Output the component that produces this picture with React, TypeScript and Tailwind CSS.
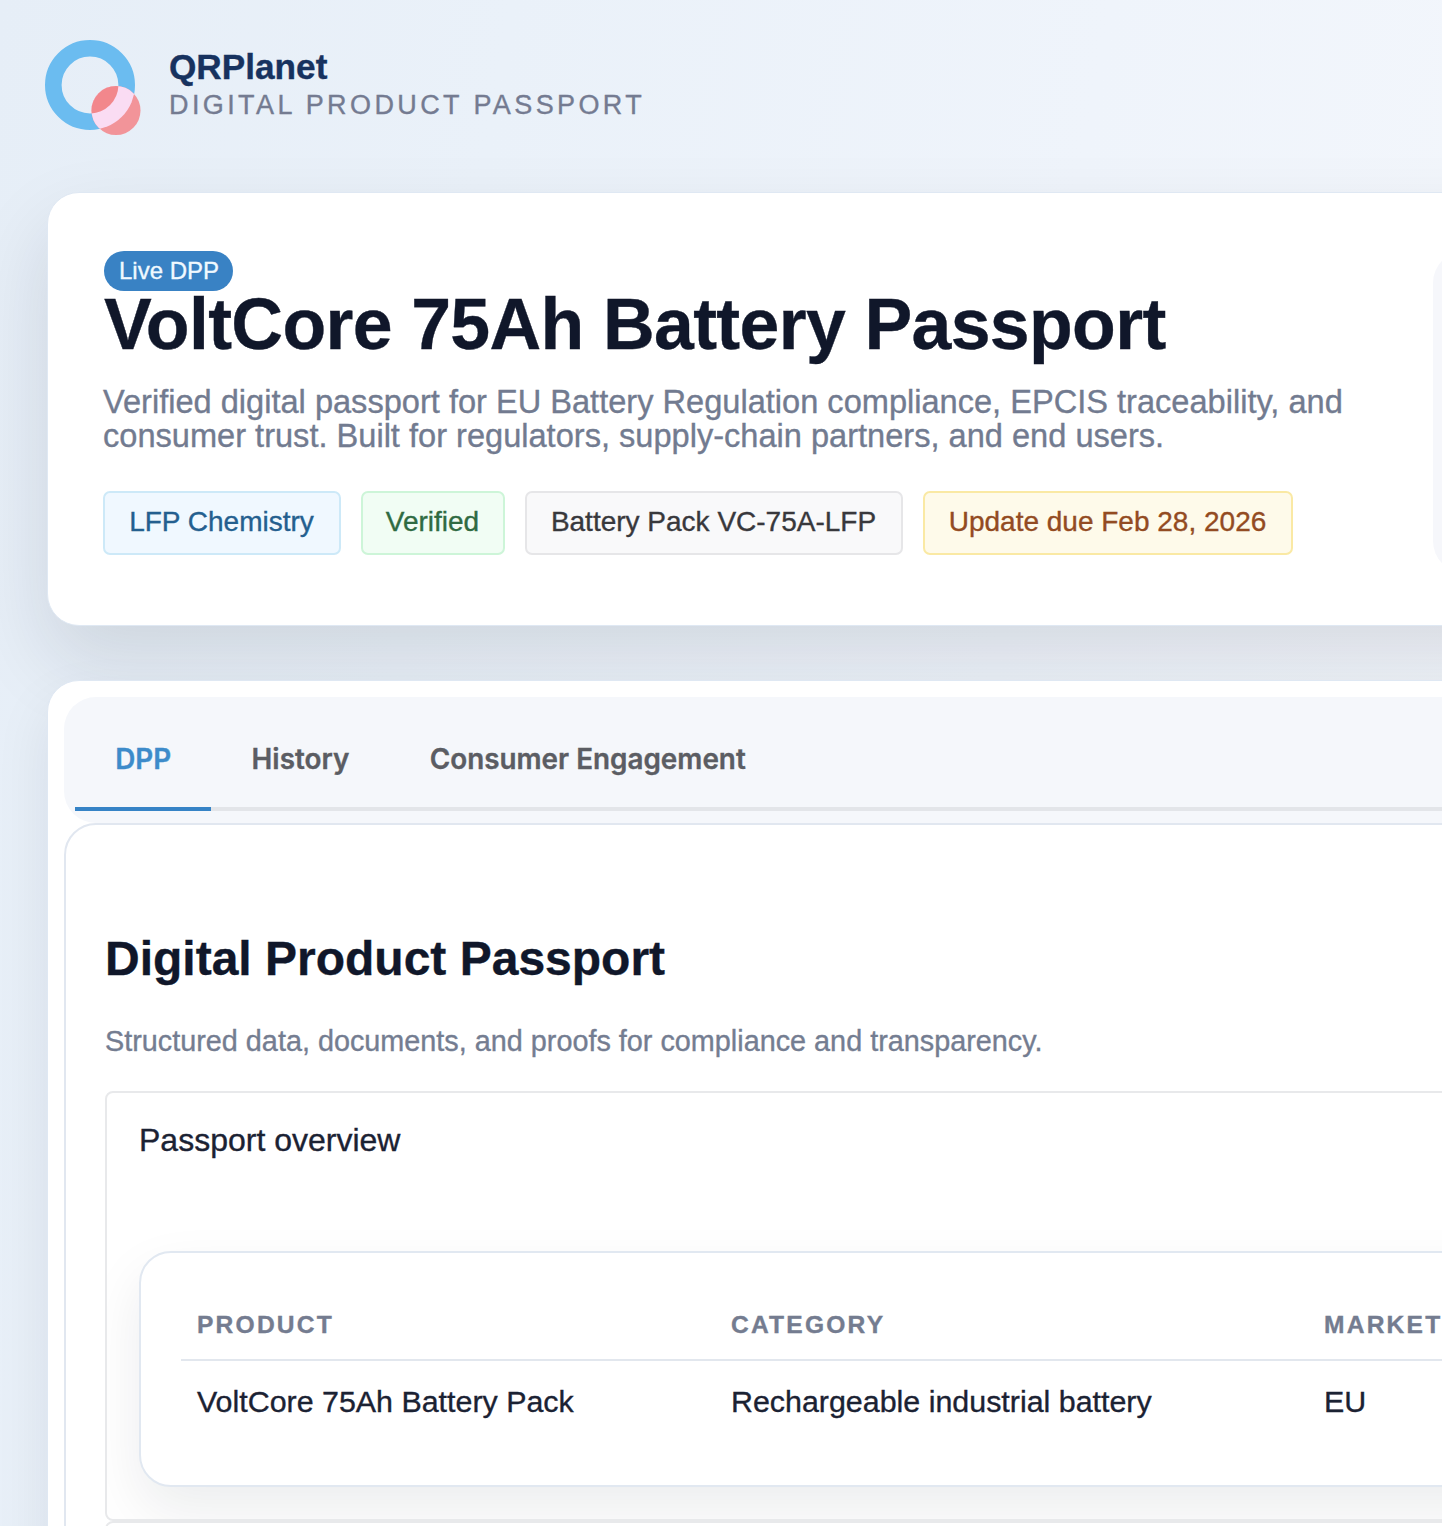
import React, { useState } from "react";
import { clsx } from "clsx";

const tabs = ["DPP", "History", "Consumer Engagement"];

const badges = [
  { label: "LFP Chemistry", className: "w-[238px] bg-[#f0f8ff] border-[#cde9f8] text-[#245f8f]" },
  { label: "Verified", className: "w-[144px] bg-[#f1fdf4] border-[#cdf5d8] text-[#2f6b42]" },
  { label: "Battery Pack VC-75A-LFP", className: "w-[378px] bg-[#f9f9fa] border-[#e6e6e8] text-[#38383c]" },
  { label: "Update due Feb 28, 2026", className: "w-[370px] bg-[#fefaea] border-[#fae9a4] text-[#934b22]" },
];

const columns = [
  { title: "Product", value: "VoltCore 75Ah Battery Pack", className: "w-[534px]" },
  { title: "Category", value: "Rechargeable industrial battery", className: "w-[593px]" },
  { title: "Market", value: "EU", className: "w-[300px]" },
];

const Logo = (props: React.SVGProps<SVGSVGElement>) => (
  <svg width="97" height="97" viewBox="0 0 97 97" fill="none" {...props}>
    <defs>
      <clipPath id="planet">
        <circle cx="71" cy="70.5" r="24.5" />
      </clipPath>
    </defs>
    <circle cx="45" cy="45" r="36.7" stroke="#6bbcf0" strokeWidth="16.6" />
    <circle cx="71" cy="70.5" r="24.5" fill="#f29499" />
    <g clipPath="url(#planet)">
      <circle cx="45" cy="45" r="45" fill="#fadcf3" />
      <circle cx="45" cy="45" r="28.4" fill="#f2878c" />
    </g>
  </svg>
);

function Header() {
  return (
    <header className="flex h-[192px] pl-[45px] pt-10">
      <Logo className="shrink-0" />
      <div className="pl-[27px] pt-[7px]">
        <div className="text-[35.2px] leading-[40px] font-bold text-[#17325f]">QRPlanet</div>
        <div className="text-[27px] leading-[37px] tracking-[3.4px] uppercase text-[#747b91]">
          Digital Product Passport
        </div>
      </div>
    </header>
  );
}

function Hero() {
  return (
    <section className="flex h-[434px] w-[2000px] rounded-[32px] border border-[#dfe8f3] bg-white pl-[56px] pt-[58px] shadow-[0_36px_80px_rgba(15,23,42,0.12)]">
      <div className="w-[1329px] shrink-0">
        <span className="flex h-10 w-[129px] items-center justify-center rounded-full bg-[#3982c4] pl-px text-[24px] text-[#f0f9ff]">
          Live DPP
        </span>
        <h1 className="text-[71.6px] leading-[67px] font-bold tracking-[-0.64px] text-[#10172a] whitespace-nowrap">
          VoltCore 75Ah Battery Passport
        </h1>
        <p className="-ml-px mt-[27px] text-[32.6px] leading-[34.4px] text-[#727b90] whitespace-nowrap">
          Verified digital passport for EU Battery Regulation compliance, EPCIS traceability, and
          <br />
          consumer trust. Built for regulators, supply-chain partners, and end users.
        </p>
        <div className="-ml-px mt-[37px] flex gap-5">
          {badges.map((badge) => (
            <span
              key={badge.label}
              className={clsx(
                "flex h-16 items-center justify-center rounded-[7px] border-2 pr-px pb-[2px] text-[28px] whitespace-nowrap",
                badge.className,
              )}
            >
              {badge.label}
            </span>
          ))}
        </div>
      </div>
      <aside className="h-[322px] w-[400px] rounded-[32px] bg-[#f6f7fb]" />
    </section>
  );
}

function Tabs() {
  const [active, setActive] = useState(tabs[0]);

  return (
    <div className="h-[126px] rounded-[32px] bg-[#f5f7fb] px-[11px] pt-3">
      <div className="flex h-[102px] border-b-4 border-[#e3e5e9]">
        {tabs.map((tab) => (
          <button
            key={tab}
            onClick={() => setActive(tab)}
            className={clsx(
              "-mb-1 h-[102px] border-b-4 px-[40.2px] pt-1 font-[Inter,sans-serif] text-[27.85px] font-semibold whitespace-nowrap",
              tab === active ? "border-[#3683c6] text-[#3d8bca]" : "border-transparent text-[#5b5d63]",
            )}
          >
            {tab}
          </button>
        ))}
      </div>
    </div>
  );
}

function OverviewTable() {
  return (
    <div className="h-[236px] w-[1760px] rounded-[32px] border-2 border-[#e1e8f1] bg-white pl-10 pt-9 shadow-[0_24px_56px_rgba(15,23,42,0.08)]">
      <div className="flex h-[72px] border-b-2 border-[#e2e7ee]">
        {columns.map((column) => (
          <div
            key={column.title}
            className={clsx(
              "px-4 pt-4 text-[24.6px] leading-[40px] font-bold tracking-[2.2px] uppercase text-[#747c90]",
              column.className,
            )}
          >
            {column.title}
          </div>
        ))}
      </div>
      <div className="flex">
        {columns.map((column) => (
          <div
            key={column.title}
            className={clsx("px-4 pt-5 text-[30.4px] leading-[40px] text-[#1b2233]", column.className)}
          >
            {column.value}
          </div>
        ))}
      </div>
    </div>
  );
}

function PassportPanel() {
  return (
    <div className="rounded-[32px] border-2 border-[#e1e7f0] bg-white pb-20 pl-[39px] pt-[104px]">
      <h2 className="text-[48px] leading-[60px] font-bold text-[#10172a]">Digital Product Passport</h2>
      <p className="mt-[32px] text-[28.8px] leading-[40px] text-[#747d91]">
        Structured data, documents, and proofs for compliance and transparency.
      </p>
      <div className="mt-[30px] h-[430px] overflow-hidden rounded-[8px] border-2 border-[#e8e9eb] pl-8">
        <h3 className="pt-[27px] text-[32px] leading-[40px] text-[#1b2233]">Passport overview</h3>
        <div className="pt-[91px]">
          <OverviewTable />
        </div>
      </div>
      <div className="h-[120px] rounded-[8px] border-2 border-[#e8e9eb]" />
    </div>
  );
}

export default function App() {
  return (
    <main className="h-[1526px] w-full overflow-hidden bg-[linear-gradient(100deg,#e6eef7_0%,#eaf1f9_30%,#eff4fb_65%,#f4f7fc_100%)] font-['Liberation_Sans',Arial,sans-serif] [-webkit-text-stroke:0.35px]">
      <Header />
      <div className="pl-[47px]">
        <Hero />
        <section className="mt-[54px] w-[2000px] rounded-[32px] border border-[#dfe8f3] bg-white p-4 shadow-[0_24px_56px_rgba(15,23,42,0.08)]">
          <Tabs />
          <PassportPanel />
        </section>
      </div>
    </main>
  );
}
